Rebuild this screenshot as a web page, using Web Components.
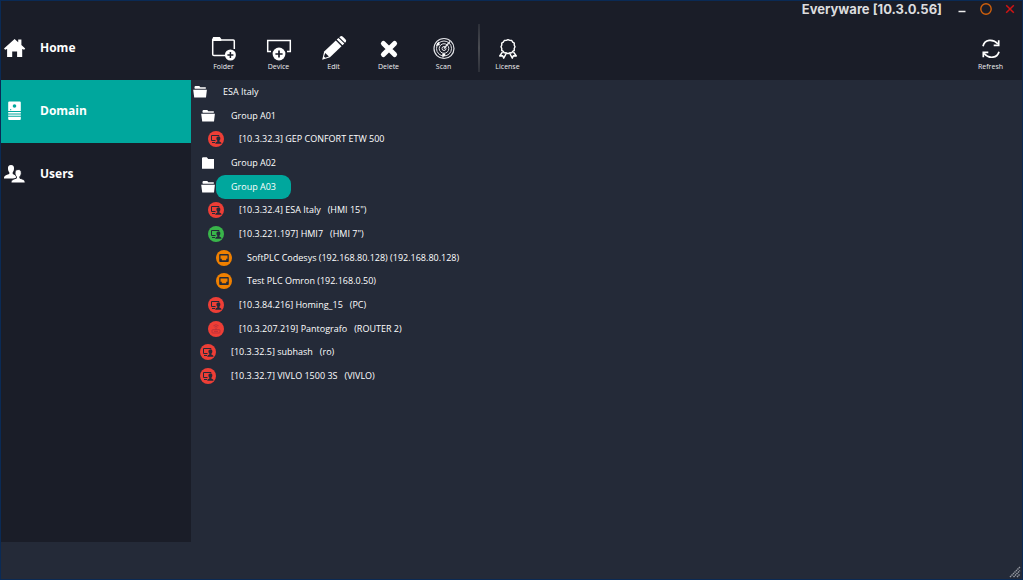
<!DOCTYPE html>
<html lang="en">
<head>
<meta charset="utf-8">
<title>Everyware</title>
<style>
html,body{margin:0;height:100%}
body{background:#242a38;color:#fff;font-family:"Open Sans","Noto Sans",sans-serif}
</style>
</head>
<body>
<app-window>
  <title-bar slot="title">Everyware [10.3.0.56]</title-bar>
  <side-nav slot="nav">
    <nav-item icon="home">Home</nav-item>
    <nav-item icon="domain" active>Domain</nav-item>
    <nav-item icon="users">Users</nav-item>
  </side-nav>
  <tool-bar slot="tools">
    <tool-button icon="addfolder">Folder</tool-button>
    <tool-button icon="adddevice">Device</tool-button>
    <tool-button icon="edit">Edit</tool-button>
    <tool-button icon="delete">Delete</tool-button>
    <tool-button icon="scan">Scan</tool-button>
    <tool-divider></tool-divider>
    <tool-button icon="license">License</tool-button>
    <tool-button icon="refresh" slot="end">Refresh</tool-button>
  </tool-bar>
  <device-tree>
    <tree-row level="0" icon="open">ESA Italy</tree-row>
    <tree-row level="1" icon="open">Group A01</tree-row>
    <tree-row level="2" icon="hmi" state="off">[10.3.32.3] GEP CONFORT ETW 500</tree-row>
    <tree-row level="1" icon="closed">Group A02</tree-row>
    <tree-row level="1" icon="open" selected>Group A03</tree-row>
    <tree-row level="2" icon="hmi" state="off">[10.3.32.4] ESA Italy   (HMI 15")</tree-row>
    <tree-row level="2" icon="hmi" state="on">[10.3.221.197] HMI7   (HMI 7")</tree-row>
    <tree-row level="3" icon="plc" state="idle">SoftPLC Codesys (192.168.80.128) (192.168.80.128)</tree-row>
    <tree-row level="3" icon="plc" state="idle">Test PLC Omron (192.168.0.50)</tree-row>
    <tree-row level="2" icon="hmi" state="off">[10.3.84.216] Homing_15   (PC)</tree-row>
    <tree-row level="2" icon="router" state="off">[10.3.207.219] Pantografo   (ROUTER 2)</tree-row>
    <tree-row level="1" icon="hmi" state="off">[10.3.32.5] subhash   (ro)</tree-row>
    <tree-row level="1" icon="hmi" state="off">[10.3.32.7] VIVLO 1500 3S   (VIVLO)</tree-row>
  </device-tree>
</app-window>
<script>
const svg = (w, h, body) => `<svg width="${w}" height="${h}" viewBox="0 0 ${w} ${h}" fill="none" aria-hidden="true">${body}</svg>`;

const ICONS = {
  home: svg(22, 20, `<path fill="#fff" d="M0 10.5 10.6 1l3.6 3.2V1.6h3.2v5.5l3.8 3.4-1 1.3-2-.8V19h-5.1v-5.5H8.2V19H3.1v-8l-2 .8z"/>`),
  domain: svg(22, 20, `<path fill="#fff" d="M4.200 1.500q0-1 1-1h10.600q1 0 1 1V10H4.200zM4.200 11h12.600v1.400H4.200zM4.200 13.400h12.600v1.300H4.200zM4.200 15.700h12.600V18q0 1-1 1H5.200q-1 0-1-1z"/><circle cx="10.500" cy="5" r="1.800" fill="#00a79d"/><circle cx="6.700" cy="8.700" r=".6" fill="#00a79d"/>`),
  users: svg(22, 20, `<path fill="#fff" d="M7 1c2.200 0 3.300 1.500 3 4-.2 1.800-.8 2.600-1.300 3.200v1.700l4 2.100v2.500H0c0-2.400.6-3 5.300-4.600V8.200C4.700 7.600 4.200 6.800 4 5 3.700 2.500 4.800 1 7 1z"/><path fill="#fff" stroke="#1a1d28" d="M14.200 5.500c2.300 0 3.400 1.500 3.100 3.900-.2 1.600-.8 2.600-1.400 3.200v1.600c4.500 1.400 5.200 2.200 5.300 4.800H7c.1-2.600.8-3.400 5.400-4.800v-1.600c-.6-.6-1.200-1.600-1.400-3.200-.3-2.400.9-3.900 3.200-3.900z"/>`),
  addfolder: svg(26, 26, `<path fill="#fff" d="M1 4.500 2.200 2h6.600l1.500 2v2H1z"/><path stroke="#fff" stroke-width="1.500" d="M14 20.500H3q-1.300 0-1.300-1.300V5h20.600q1 0 1 1v8"/><circle cx="19.400" cy="20" r="5.500" fill="#fff"/><path stroke="#1a1d28" stroke-width="1.500" d="M19.400 17v6M16.400 20h6"/>`),
  adddevice: svg(26, 26, `<path stroke="#fff" stroke-width="1.500" d="M5 16.500H1.700v-11h22.600v11H21"/><circle cx="13" cy="19" r="6.400" fill="#fff"/><path stroke="#1a1d28" stroke-width="1.700" d="M13 15.400v7.200M9.400 19h7.200"/>`),
  edit: svg(26, 26, `<path fill="#fff" d="m3.200 16.500 11.600-11 5.700 5.800L9 22.300 1.200 24.700z"/><path fill="#fff" d="m15.700 4.600 1.800-1.700 5.800 5.700-1.800 1.700zM18.300 2.200l.9-.8q1.300-1 2.700.3l2.500 2.500q1.400 1.400.4 2.700l-.8.9z"/><path fill="#1a1d28" d="m4.200 18.100 3.700 3.400-3.700 1.200-1.200-1.200z"/>`),
  delete: svg(26, 26, `<path stroke="#fff" stroke-width="5" stroke-linecap="round" d="m7.400 8.400 11.200 11.200M18.600 8.400 7.400 19.600"/>`),
  scan: svg(26, 26, `<g stroke="#e3e4e8"><circle cx="13" cy="13.500" r="10" stroke-width="1.200"/><circle cx="13" cy="13.500" r="7.500"/><circle cx="13" cy="13.500" r="4.800"/><circle cx="13" cy="13.500" r="2"/><path stroke-width="1.400" d="m13 13.500 6-7M5.500 11l2.500-4M12 22.500v-4"/></g><circle cx="7.200" cy="9.200" r="1.400" fill="#fff"/><circle cx="13" cy="19.700" r="1.300" fill="#fff"/>`),
  license: svg(26, 26, `<g stroke="#fff" stroke-width="1.400" stroke-linejoin="round"><path d="m13 4.600 1.800.8 2 .1.900 1.600 1.600 1-.1 1.900.8 1.800-.8 1.700.1 1.900-1.600.9-1 1.600-2-.1-1.700.9-1.800-.9-2 .1-.9-1.600-1.600-.9.100-1.900-.8-1.700.8-1.800-.1-1.900 1.600-1 1-1.600 2-.1z"/><path d="m7.500 17-2.800 4 3-.2 1 2.400 2.700-5M18.500 17l2.800 4-3-.2-1 2.400-2.700-5"/></g>`),
  refresh: svg(26, 26, `<g stroke="#fff" stroke-width="1.700"><path d="M5 11.300C6.500 4.400 14.800 3.300 20 9M21 16.700c-1.500 6.200-9.800 7.800-15 1.700"/><path d="M20.700 5.300v5h-5M5.300 22.300v-5h5"/></g>`),
  open: svg(16, 16, `<path fill="#fff" d="M2.500 4V2.800l.8-.8h4l1 1.200h5.500v1.600h-11zM1.200 5.700h13.700l-.9 7.800H2.200z"/>`),
  closed: svg(16, 16, `<path fill="#fff" d="M2 3l.8-.8h4L8.200 4H14v9.800H2z"/>`),
  hmi: svg(16, 16, `<circle cx="8" cy="8" r="8" fill="var(--state)"/><path stroke="#242a38" d="M7.500 9.500h-4v-5h7.500v1"/><path stroke="#242a38" d="M4 11.500h3"/><path fill="#242a38" d="M10.400 5.400c1.700 0 2.200 1.100 1.900 2.600-.1.900-.6 1.300-.8 1.600v1.100c1.500.4 2 .8 2 2H7.300c0-1.200.5-1.600 2-2V9.600c-.2-.3-.7-.7-.8-1.600-.3-1.500.2-2.600 1.900-2.600z"/>`),
  plc: svg(16, 16, `<circle cx="8" cy="8" r="8" fill="var(--state)"/><rect x="3.200" y="4" width="9.600" height="8" rx="1" fill="#242a38"/><path fill="var(--state)" d="M4.500 5.400h7v3.400h-1.300v1.400H5.800V8.800H4.500z"/>`),
  router: svg(16, 16, `<circle cx="8" cy="8" r="8" fill="var(--state)"/><g stroke="#b8323a" stroke-width=".9"><rect x="4" y="8.700" width="8" height="3.300" rx=".7"/><path d="M8 6.800v2M6.400 6.200q1.600-1.400 3.200 0M5.400 4.800q2.600-2.200 5.200 0M6 10.400h4"/></g>`)
};

class Base extends HTMLElement {
  connectedCallback() {
    if (this.shadowRoot) return;
    this.attachShadow({ mode: "open" }).innerHTML = this.view();
  }
}
const define = (name, view) => customElements.define(name, class extends Base {
  view() { return view(this); }
});

define("app-window", () => `
<style>
:host{display:grid;grid-template:16px minmax(0,1fr) 37px / minmax(0,1fr);box-sizing:border-box;min-height:100vh;border:1px solid #0a2a55;background:linear-gradient(#1a1d28 79px,#242a38 79px)}
.body{display:grid;grid-template:63px 1fr / 190px minmax(0,1fr)}
.nav{grid-row:1 / 3;display:grid}
footer{display:flex;justify-content:flex-end;align-items:flex-end;padding:1px}
</style>
<slot name="title"></slot>
<div class="body">
  <div class="nav"><slot name="nav"></slot></div>
  <slot name="tools"></slot>
  <main><slot></slot></main>
</div>
<footer>${svg(12, 12, `<path stroke="#9a9da5" stroke-width="1.400" stroke-dasharray="1.500 .6" d="M1 11 11 1M4.500 11 11 4.500M8 11l3-3"/>`)}</footer>`);

define("title-bar", () => `
<style>
:host{display:flex;justify-content:flex-end;align-items:center;font:700 13px/16px Inter,sans-serif;color:#dcdcde}
h1{margin:0 8px 0 0;font:inherit}
button{display:grid;place-items:center;width:24px;height:16px;padding:0;border:0;background:none}
</style>
<h1><slot></slot></h1>
<button aria-label="Minimize">${svg(12, 12, `<path stroke="#eee" stroke-width="1.500" d="M2.500 8.500h7"/>`)}</button>
<button aria-label="Maximize">${svg(12, 12, `<circle cx="6" cy="6" r="5.200" stroke="#d0600c" stroke-width="1.400"/>`)}</button>
<button aria-label="Close">${svg(12, 12, `<path stroke="#d01414" stroke-width="1.500" d="m2.200 2.200 7.600 7.600M9.800 2.200 2.200 9.800"/>`)}</button>`);

define("side-nav", () => `
<style>
:host{display:block;background:#1a1d28}
nav{display:flex;flex-direction:column}
</style>
<nav><slot></slot></nav>`);

define("nav-item", el => `
<style>
:host{display:block}
a{display:flex;align-items:center;gap:14px;box-sizing:border-box;height:63px;padding:0 0 2px 3px;font-size:12px;font-weight:700;color:#fff;text-decoration:none}
:host([active]) a{background:#00a79d}
</style>
<a href="#"${el.hasAttribute("active") ? ' aria-current="page"' : ""}>${ICONS[el.getAttribute("icon")]}<slot></slot></a>`);

define("tool-bar", () => `
<style>
:host{display:flex;justify-content:space-between;padding:0 4px 0 5px;background:#1a1d28}
div{display:flex}
</style>
<div><slot></slot></div><slot name="end"></slot>`);

define("tool-button", el => `
<style>
:host{display:block}
button{display:flex;flex-direction:column;align-items:center;width:55px;height:63px;padding:18px 0 0;border:0;background:none;font:7px/10px "Open Sans",sans-serif;color:#f0f0f2}
svg{margin-bottom:1px}
</style>
<button>${ICONS[el.getAttribute("icon")]}<span><slot></slot></span></button>`);

define("tool-divider", () => `
<style>:host{display:block;width:2px;height:48px;margin:7px 0 0 7px;background:linear-gradient(#2c2f38,#4a4c52 50%,#2c2f38)}</style>`);

define("device-tree", () => `
<style>
:host{display:grid;grid-auto-rows:minmax(0,1fr);height:308px;padding-left:1px}
</style>
<slot></slot>`);

define("tree-row", el => `
<style>
:host{display:flex;align-items:center;--state:#ee3e36;padding-left:calc(8px * var(--level))}
:host([level="0"]){--level:0}
:host([level="1"]){--level:1}
:host([level="2"]){--level:2}
:host([level="3"]){--level:3}
:host([state="on"]){--state:#39b54a}
:host([state="idle"]){--state:#f08000}
svg{flex:none}
button{height:24px;padding:0 15px;border:0;border-radius:9px;background:none;font:9px/24px "Open Sans",sans-serif;color:#fff;white-space:pre}
:host([selected]) button{background:#00a79d}
</style>
${ICONS[el.getAttribute("icon")]}<button><slot></slot></button>`);
</script>
</body>
</html>
